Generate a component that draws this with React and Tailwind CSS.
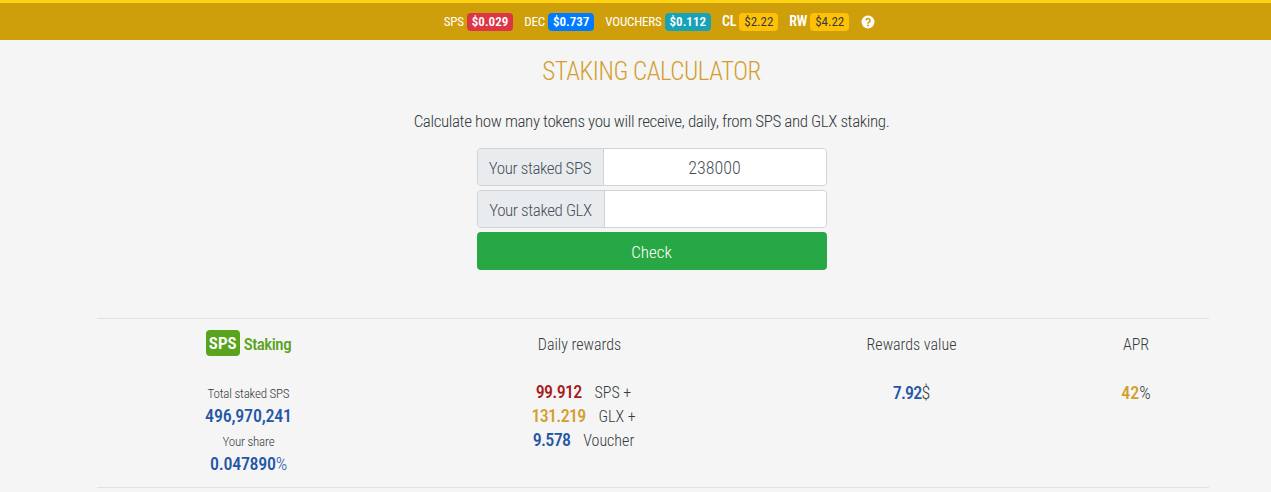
import React from 'react';

const Price = ({ label, value, color, strong }) => (
  <div className="flex items-center">
    <span className={`text-white ${strong ? 'text-[14px] font-semibold tracking-[-0.2px]' : 'text-[13px] font-normal tracking-[-0.2px]'}`}>{label}</span>
    <span className={`ml-[3px] h-[18px] rounded-[4px] px-[5px] text-[13px] leading-[18px] ${color}`}>{value}</span>
  </div>
);

const InputRow = ({ label, value, labelWidth }) => (
  <div className="flex h-[38px] w-[350px] overflow-hidden rounded-[4px] border border-[#ced4da]">
    <div className={`flex shrink-0 items-center justify-center whitespace-nowrap border-r border-[#ced4da] bg-[#e9ecef] pt-[3px] text-[17px] tracking-[-0.4px] text-[#495057] ${labelWidth}`}>
      {label}
    </div>
    <div className="flex flex-1 items-center justify-center bg-white text-[18px] text-[#495057]">{value}</div>
  </div>
);

const Reward = ({ amount, unit, color }) => (
  <div className="h-[24px] leading-[24px]">
    <span className={`mr-[13px] text-[18px] leading-none font-medium tracking-[-0.7px] ${color}`}>{amount}</span>
    {unit}
  </div>
);

export default function App() {
  return (
    <div className="h-[492px] overflow-hidden bg-[#f5f5f5] font-['Roboto',sans-serif] font-light text-[#343a40] [font-stretch:75%]">
      <div className="flex h-[40px] items-center justify-center gap-[11px] border-t-[3px] border-[#fdd213] bg-[#cf9f0b] pl-[48px]">
        <Price label="SPS" value="$0.029" color="bg-[#dc3545] font-semibold text-white" />
        <Price label="DEC" value="$0.737" color="bg-[#007bff] font-semibold text-white" />
        <Price label="VOUCHERS" value="$0.112" color="bg-[#17a2b8] font-semibold text-white" />
        <Price label="CL" value="$2.22" color="bg-[#ffc107] font-normal text-[#343a40]" strong />
        <Price label="RW" value="$4.22" color="bg-[#ffc107] font-normal text-[#343a40]" strong />
        <svg width="14" height="14" viewBox="0 0 14 14" className="ml-[1px]">
          <circle cx="7" cy="7" r="6.5" fill="#fff" />
          <path d="M5 5.4a2 2 0 1 1 3 1.8c-.7.4-1 .7-1 1.5" fill="none" stroke="#cf9f0b" strokeWidth="1.6" />
          <circle cx="7" cy="10.6" r="1" fill="#cf9f0b" />
        </svg>
      </div>

      <div className="flex flex-col items-center pl-[32px]">
        <h1 className="mt-[15px] text-[25px] leading-[34px] tracking-[-0.45px] text-[#d39e2e]">STAKING CALCULATOR</h1>
        <p className="mt-[19px] text-[17px] leading-[27px] tracking-[-0.39px]">
          Calculate how many tokens you will receive, daily, from SPS and GLX staking.
        </p>

        <div className="mt-[13px] flex flex-col gap-[4px]">
          <InputRow label="Your staked SPS" value="238000" labelWidth="w-[126px]" />
          <InputRow label="Your staked GLX" value="" labelWidth="w-[127px]" />
          <button className="h-[38px] w-[350px] rounded-[4px] bg-[#28a745] pt-[3px] text-[17px] text-white">Check</button>
        </div>

        <div className="mt-[48px] ml-[2px] grid w-[1112px] grid-cols-[304px_358px_306px_144px] border-y border-[#dee2e6] pt-[11px] pb-[10px] text-center text-[16px]">
          <div className="flex flex-col items-center">
            <div className="flex h-[26px] items-center">
              <span className="rounded-[4px] bg-[#5aa31e] px-[3px] text-[17px] leading-[26px] font-semibold text-white">SPS</span>
              <span className="ml-[4px] pt-[3px] text-[17px] font-medium tracking-[-0.5px] text-[#5aa31e]">Staking</span>
            </div>
            <div className="mt-[25px] pt-[4px] text-[13px] leading-[18px] tracking-[-0.2px]">Total staked SPS</div>
            <div className="text-[18px] leading-[26px] font-medium tracking-[-0.2px] text-[#2456a6]">496,970,241</div>
            <div className="pt-[4px] text-[13px] leading-[18px] tracking-[-0.2px]">Your share</div>
            <div className="text-[18px] leading-[26px] font-medium tracking-[-0.3px] text-[#2456a6]">
              0.047890<span className="font-light">%</span>
            </div>
          </div>

          <div className="flex flex-col items-center">
            <div className="leading-[30px]">Daily rewards</div>
            <div className="mt-[21px] pl-[8px] text-[16px]">
              <Reward amount="99.912" unit="SPS +" color="text-[#a51c1c]" />
              <Reward amount="131.219" unit="GLX +" color="text-[#d39e2e]" />
              <Reward amount="9.578" unit="Voucher" color="text-[#2456a6]" />
            </div>
          </div>

          <div className="flex flex-col items-center">
            <div className="leading-[30px]">Rewards value</div>
            <div className="mt-[21px] text-[18px] leading-[24px]"><span className="font-medium tracking-[-0.8px] text-[#2456a6]">7.92</span>$</div>
          </div>

          <div className="flex flex-col items-center pr-[1px]">
            <div className="leading-[30px]">APR</div>
            <div className="mt-[21px] text-[18px] leading-[24px]"><span className="font-medium text-[#d39e2e]">42</span>%</div>
          </div>
        </div>
      </div>
    </div>
  );
}
